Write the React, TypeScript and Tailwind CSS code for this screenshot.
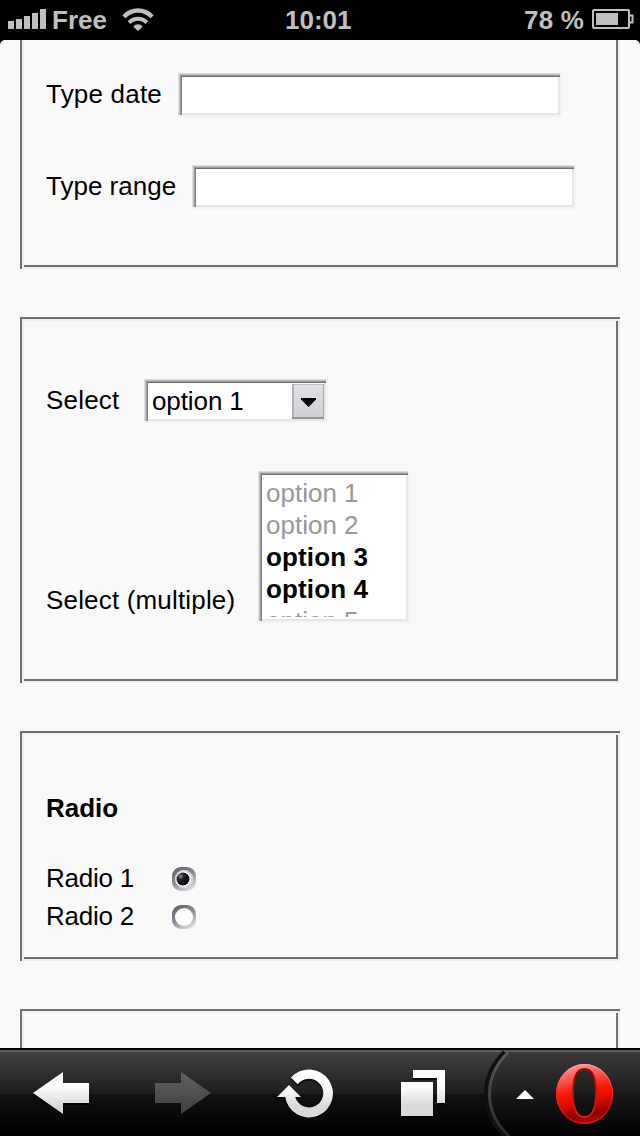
import type { ReactNode } from "react";

const bevel =
  "bg-white shadow-[inset_-2px_0_#f2f4f4,inset_0_-2px_#f2f4f4,inset_0_1px_#dcdcdc,inset_1px_0_#dedede,inset_0_2px_#bdbdbd,inset_2px_0_#c4c4c4,inset_0_3px_#9a9a9a,inset_3px_0_#a0a0a0,inset_0_4px_#707072,inset_4px_0_#7c7c7e,inset_-4px_0_#e6e8e8,inset_0_-4px_#e6e8e8]";

function Group({ className, children }: { className: string; children?: ReactNode }) {
  return (
    <section
      className={`mx-5 shrink-0 pl-[26px] shadow-[inset_0_2px_#707070,inset_2px_0_#707070,inset_-2px_0_#eeeeee,inset_0_-2px_#eeeeee,inset_0_4px_#f0f0f0,inset_4px_0_#f0f0f0,inset_-4px_0_#707070,inset_0_-4px_#707070] ${className}`}
    >
      {children}
    </section>
  );
}

function StatusBar() {
  return (
    <header className="flex h-10 shrink-0 items-start bg-black pt-1 font-bold text-[#bfbfbf]">
      <div className="flex w-[285px]">
        <svg className="mt-[5px] ml-2 h-5 w-[38px]" viewBox="0 0 38 20" fill="#bfbfbf">
          <path d="M0 12h6v8H0zM8 10h6v10H8zM16 7h6v13h-6zM24 4h6v16h-6zM32 0h6v20h-6z" />
        </svg>
        <span className="ml-[6px] w-[55px]">Free</span>
        <svg className="mt-1 ml-[15px] h-6 w-8" viewBox="0 0 32 24" fill="none" stroke="#bfbfbf">
          <path d="M1.8 8.8C9.8 .4 22.2 .4 30.2 8.8" strokeWidth="4.3" />
          <path d="M7.2 14.6C12.1 9.5 19.900 9.5 24.8 14.6" strokeWidth="4" />
          <path d="M11.3 18.8C13.7 15.5 18.3 15.5 20.7 18.8L16 23z" fill="#bfbfbf" stroke="none" />
        </svg>
      </div>
      <span className="w-[239px]">10:01</span>
      <span className="w-[68px] tracking-[0.2px] whitespace-nowrap">78 %</span>
      <svg className="mt-[5px] h-5 w-[42px]" viewBox="0 0 42 20" fill="none" stroke="#bfbfbf" strokeWidth="2">
        <rect x="1" y="1" width="36" height="18" rx="1" />
        <path d="M4 4h22v12H4z" fill="#bfbfbf" stroke="none" />
        <path d="M37 6.5h3.5v7H37" />
      </svg>
    </header>
  );
}

function Radio({ label, checked, className }: { label: string; checked?: boolean; className: string }) {
  return (
    <div className={`flex h-8 ${className}`}>
      <span className="w-[125px] tracking-[-0.25px]">{label}</span>
      <svg className="mt-1 size-[26px]" viewBox="0 0 26 26">
        <defs>
          <linearGradient id="ring" x1=".2" y1="0" x2=".8" y2="1">
            <stop offset=".05" stopColor="#666870" />
            <stop offset=".5" stopColor="#8d9099" />
            <stop offset="1" stopColor="#e4e5e8" />
          </linearGradient>
          <radialGradient id="dot" cx=".32" cy=".3" r=".65">
            <stop offset="0" stopColor="#999ca4" />
            <stop offset=".35" stopColor="#292a30" />
            <stop offset="1" stopColor="#000" />
          </radialGradient>
        </defs>
        <rect x="1" y="1" width="24" height="24" rx="9" fill="url(#ring)" />
        <circle cx="13" cy="13" r="9" fill="#fff" />
        {checked && <circle cx="13" cy="13" r="9" fill="#d2d3d7" />}
        {checked && <circle cx="12.5" cy="13" r="7.5" fill="#fff" />}
        {checked && <circle cx="12" cy="13" r="6.5" fill="url(#dot)" />}
      </svg>
    </div>
  );
}

function Toolbar() {
  return (
    <nav className="flex h-[88px] shrink-0 border-t-2 border-black bg-[linear-gradient(#5c5c5c_0px,#5c5c5c_2px,#424242_2px,#1c1c1c_44px,#111111_44px,#000000_84px)]">
      <svg className="h-[86px] w-[480px] shrink-0" viewBox="0 1050 480 86">
        <defs>
          <linearGradient id="metal" gradientUnits="userSpaceOnUse" x1="0" x2="0" y1="1086" y2="1106">
            <stop stopColor="#fff" />
            <stop offset="1" stopColor="#d9d9d9" />
          </linearGradient>
          <linearGradient id="dim" gradientUnits="userSpaceOnUse" x1="0" x2="0" y1="1074" y2="1112">
            <stop stopColor="#606060" />
            <stop offset="1" stopColor="#404040" />
          </linearGradient>
          <filter id="drop" x="-20%" y="-20%" width="140%" height="150%" colorInterpolationFilters="sRGB">
            <feDropShadow dx="0" dy="2" stdDeviation=".5" floodColor="#000" floodOpacity=".7" />
          </filter>
        </defs>
        <g filter="url(#drop)">
          <path d="M33 1093L63 1072V1083H89V1103H63V1114z" fill="url(#metal)" />
          <path
            d="M291 1077.5A24 24 0 1 1 285.2 1097H277L289 1085L301 1097H295.2A14.3 14.3 0 1 0 297.7 1084.3z"
            fill="url(#metal)"
          />
          <path d="M401 1082h32v34h-32zM413 1070h32v33h-8v-25h-24z" fill="url(#metal)" />
        </g>
        <path d="M211 1093L181 1072V1083H155V1103H181V1114z" fill="url(#dim)" />
      </svg>
      <svg className="h-[86px] w-[160px] shrink-0" viewBox="480 1050 160 86">
        <defs>
          <linearGradient id="panel" x1="0" x2="0" y1="0" y2="1">
            <stop stopColor="#393939" />
            <stop offset=".49" stopColor="#1c1c1c" />
            <stop offset=".5" stopColor="#181818" />
            <stop offset="1" stopColor="#000" />
          </linearGradient>
          <linearGradient id="edge" gradientUnits="userSpaceOnUse" x1="0" x2="0" y1="1052" y2="1136">
            <stop stopColor="#5a5a5a" />
            <stop offset="1" stopColor="#292929" />
          </linearGradient>
          <linearGradient id="red" x1=".4" x2=".6" y1="0" y2="1">
            <stop stopColor="#ff9090" />
            <stop offset=".25" stopColor="#ff4a4a" />
            <stop offset=".45" stopColor="#fa1602" />
            <stop offset=".6" stopColor="#e50d00" />
            <stop offset=".85" stopColor="#8e0000" />
            <stop offset="1" stopColor="#c50b05" />
          </linearGradient>
          <linearGradient id="rim" x1="0" x2="0" y1="0" y2="1">
            <stop stopColor="#ffabab" />
            <stop offset=".5" stopColor="#fa2010" />
            <stop offset="1" stopColor="#e01910" />
          </linearGradient>
          <linearGradient id="innerRim" x1="0" x2="0" y1="0" y2="1">
            <stop stopColor="#990505" />
            <stop offset=".5" stopColor="#b81008" />
            <stop offset="1" stopColor="#e02010" />
          </linearGradient>
        </defs>
        <path d="M640 1052H508Q490 1070 490 1094T510 1136H640z" fill="url(#panel)" />
        <path d="M504.5 1052Q486 1070 486 1094T505 1136" fill="none" stroke="#101010" strokeWidth="4" />
        <path d="M508.5 1052Q489.5 1070 489.5 1094T509 1136" fill="none" stroke="url(#edge)" strokeWidth="3" />
        <path d="M516 1099L525 1090L534 1099z" fill="#fff" />
        <path
          d="M584.5 1064a28.5 30 0 1 0 0 60a28.5 30 0 1 0 0-60zM584.5 1069C592.500 1069 596 1078 596 1093S592.5 1117 584.5 1117S573 1108 573 1093S576.5 1069 584.5 1069z"
          fill="url(#red)"
          fillRule="evenodd"
        />
        <ellipse cx="584.5" cy="1094" rx="28" ry="29.5" fill="none" stroke="url(#rim)" strokeWidth="1" />
        <path
          d="M584.5 1069C592.5 1069 596 1078 596 1093S592.5 1117 584.5 1117S573 1108 573 1093S576.5 1069 584.5 1069z"
          fill="none"
          stroke="url(#innerRim)"
          strokeWidth="1.8"
        />
      </svg>
    </nav>
  );
}

export default function App() {
  return (
    <div className="flex h-[1136px] w-[640px] flex-col overflow-hidden bg-black font-['Liberation_Sans',Arial,sans-serif] text-[26px] leading-8 text-black">
      <StatusBar />
      <main className="flex h-[1008px] shrink-0 flex-col overflow-hidden rounded-t-[5px] bg-[#f9f9f9]">
        <Group className="-mt-1 h-[233px] pt-[37px]">
          <div className="flex h-11">
            <label htmlFor="date" className="mt-[5px] w-[132px] tracking-[0.2px]">Type date</label>
            <input id="date" className={`h-11 w-96 px-2 outline-none ${bevel}`} />
          </div>
          <div className="mt-12 flex h-11">
            <label htmlFor="range" className="mt-[5px] w-[146px]">Type range</label>
            <input id="range" className={`h-11 w-96 px-2 outline-none ${bevel}`} />
          </div>
        </Group>
        <Group className="mt-12 h-[366px] pt-[62px]">
          <div className="flex h-11">
            <span className="mt-[5px] w-[98px] tracking-[0.2px]">Select</span>
            <div className={`flex h-11 w-[184px] pt-[5px] pl-2 ${bevel}`}>
              <span className="mt-px w-[140px] tracking-[-0.1px]">option 1</span>
              <span className="flex h-[35px] w-8 items-center justify-center bg-linear-to-b from-[#e3e2e8] to-[#cfced4] pt-px shadow-[inset_0_-2px_#929292,inset_2px_0_#b0b0b2,inset_-1px_0_#a8a8aa,inset_0_1px_#bcbcbe]">
                <svg className="h-[9px] w-[15px]" viewBox="0 0 15 9">
                  <path d="M0 0H15V1.5L7.5 9L0 1.5z" />
                </svg>
              </span>
            </div>
          </div>
          <div className="mt-12 flex h-[152px] items-end">
            <span className="mb-[7px] w-[212px] tracking-[0.17px]">Select (multiple)</span>
            <div className={`h-[152px] w-[152px] pt-[6px] pl-2 ${bevel}`}>
              <ul className="h-[140px] overflow-hidden text-[#999999]">
                <li>option 1</li>
                <li>option 2</li>
                <li className="font-bold tracking-[0.13px] text-black">option 3</li>
                <li className="font-bold tracking-[0.13px] text-black">option 4</li>
                <li>option 5</li>
              </ul>
            </div>
          </div>
        </Group>
        <Group className="mt-12 h-[230px] pt-[61px]">
          <h2 className="font-bold">Radio</h2>
          <Radio label="Radio 1" checked className="mt-[38px]" />
          <Radio label="Radio 2" className="mt-[6px]" />
        </Group>
        <Group className="mt-12 h-[230px]" />
      </main>
      <Toolbar />
    </div>
  );
}
